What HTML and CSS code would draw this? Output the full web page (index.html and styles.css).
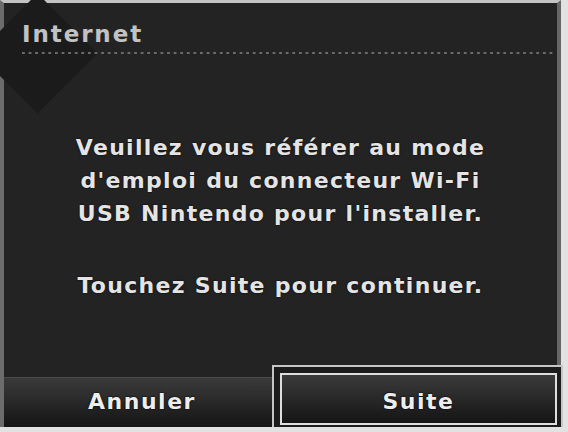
FILE: index.html
```html
<!DOCTYPE html>
<html lang="fr">
<head>
<meta charset="utf-8">
<title>Internet</title>
<link rel="stylesheet" href="styles.css">
</head>
<body>
<div class="screen">
  <div class="corner"></div>
  <header class="header">
    <h1 class="title">Internet</h1>
    <div class="rule"></div>
  </header>
  <main class="message">
    <p>Veuillez vous référer au mode<br>d'emploi du connecteur Wi-Fi<br>USB Nintendo pour l'installer.</p>
    <p>Touchez Suite pour continuer.</p>
  </main>
  <footer class="actions">
    <div class="cell"><button class="btn">Annuler</button></div>
    <div class="frame"><button class="btn btn-selected">Suite</button></div>
  </footer>
</div>
</body>
</html>
```
FILE: styles.css
```css
html, body {
  margin: 0;
  padding: 0;
}
body {
  width: 568px;
  height: 432px;
  background: #e2e2e2;
  overflow: hidden;
  font-family: "DejaVu Sans", "Liberation Sans", sans-serif;
}
.screen {
  position: relative;
  width: 553px;
  height: 424px;
  background: #232323;
  border-top: 3px solid #c4c4c4;
  border-left: 4px solid #6c6c6c;
  border-right: 4px solid #666;
  display: flex;
  flex-direction: column;
}
.corner {
  position: absolute;
  left: -9px;
  top: 8px;
  width: 85px;
  height: 85px;
  background: #1b1b1b;
  transform: rotate(45deg);
}
.header {
  position: relative;
  padding: 20px 4px 0 18px;
}
.title {
  margin: 0;
  font-size: 23px;
  line-height: 23px;
  font-weight: bold;
  letter-spacing: 1.9px;
  color: #c2c2c2;
}
.rule {
  margin-top: 6px;
  height: 2px;
  background-image: linear-gradient(to right, #6a6a6a 0 3px, transparent 3px);
  background-size: 6.6px 2px;
}
.message {
  position: relative;
  padding-top: 77px;
  text-align: center;
  color: #e4e4e4;
  font-size: 22px;
  font-weight: bold;
  line-height: 33px;
  letter-spacing: 1.3px;
  text-shadow: 0 0 2px #000;
}
.message p {
  margin: 0;
}
.message p + p {
  margin-top: 39px;
}
.actions {
  margin-top: auto;
  margin-right: -6px;
  height: 62px;
  display: grid;
  grid-template-columns: 268px 1fr;
}
.cell {
  padding-top: 12px;
  display: flex;
}
.frame {
  border: 2px solid #c6c6c6;
  border-bottom: none;
  padding: 6px 4px 2px 6px;
  background: #1c1c1c;
  display: flex;
}
.btn {
  flex: 1;
  margin: 0;
  padding: 0 0 2px 8px;
  border: none;
  border-top: 1px solid #4a4a4a;
  background: linear-gradient(#3a3a3a 0%, #2e2e2e 35%, #1e1e1e 75%, #151515 100%);
  color: #ededed;
  font-family: "DejaVu Sans", "Liberation Sans", sans-serif;
  font-size: 22px;
  font-weight: bold;
  letter-spacing: 1.5px;
  text-shadow: 0 0 2px #000, 0 0 1px #000;
}
.btn-selected {
  border: 2px solid #dedede;
  padding: 4px 0 0 0;
}
```
